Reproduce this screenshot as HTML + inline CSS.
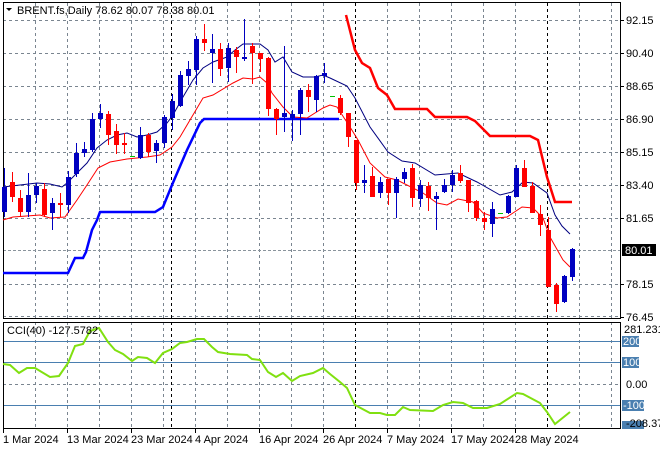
<!DOCTYPE html>
<html><head><meta charset="utf-8"><style>
html,body{margin:0;padding:0;background:#fff;}
svg{display:block;font-family:"Liberation Sans","DejaVu Sans",sans-serif;font-size:11px;}
</style></head><body>
<svg width="660" height="450" viewBox="0 0 660 450" xmlns="http://www.w3.org/2000/svg">
<rect width="660" height="450" fill="#fff"/>
<g stroke="#7a8590" stroke-width="1" stroke-dasharray="3,3" fill="none">
<path d="M35.5 3V318M67.5 3V318M99.5 3V318M131.5 3V318M163.5 3V318M195.5 3V318M227.5 3V318M259.5 3V318M291.5 3V318M323.5 3V318M387.5 3V318M419.5 3V318M451.5 3V318M483.5 3V318M515.5 3V318M579.5 3V318M611.5 3V318"/>
<path d="M35.5 322V428M67.5 322V428M99.5 322V428M131.5 322V428M163.5 322V428M195.5 322V428M227.5 322V428M259.5 322V428M291.5 322V428M323.5 322V428M387.5 322V428M419.5 322V428M451.5 322V428M483.5 322V428M515.5 322V428M579.5 322V428M611.5 322V428"/>
<path d="M3 20.5H621M3 53.5H621M3 86.5H621M3 119.5H621M3 152.5H621M3 185.5H621M3 218.5H621M3 284.5H621M3 316.5H621M3 384.5H621"/>
</g>
<path d="M3 250.5H621" stroke="#8a949c" stroke-dasharray="3,2"/>
<g stroke="#000" stroke-dasharray="3,3" fill="none">
<path d="M171.5 3V318M355.5 3V318M547.5 3V318M171.5 322V428M355.5 322V428M547.5 322V428"/>
</g>
<g stroke="#4a7fb0" stroke-width="1"><path d="M3 341.5H621M3 362.5H621M3 405.5H621"/></g>
<rect x="3.5" y="2.5" width="617" height="316" fill="none" stroke="#000"/>
<rect x="3.5" y="322.5" width="617" height="106" fill="none" stroke="#000"/>
<polyline fill="none" stroke="#0000ff" stroke-width="2.5" points="3,273 68,273 75,258 83,258 86,252 92,230 97,220 100,212 155,212 163,207 172,185 187,150 200,123 204,119 339,119"/>
<polyline fill="none" stroke="#ff0000" stroke-width="2.5" points="346,15 355,50 362,63 370,68 378,88 387,95 395,109 427,109 435,117 467,117 475,121 490,136 530,136 538,140 547,177 555,202 572,202"/>
<polyline fill="none" stroke="#000080" stroke-width="1" points="3,187 20,185 37,183 50,184 62,187 67,183 77,173 87,163 97,148 107,140 117,135 127,133 137,137 147,135 157,132 167,123 173,115 183,97 193,80 203,68 213,62 227,57 235,50 243,44 260,44 268,50 275,62 283,57 292,72 303,77 315,77 323,75 330,78 347,86 355,98 370,127 388,152 402,161 415,163 435,175 458,173 477,182 500,195 512,192 523,182 533,183 547,193 555,215 562,226 570,234"/>
<polyline fill="none" stroke="#ff0000" stroke-width="1" points="3,220 13,217 40,215 50,218 65,217 77,200 87,185 98,168 110,162 127,159 147,157 160,155 172,147 180,137 190,120 203,98 213,95 233,83 243,78 253,79 260,77 267,83 272,93 283,107 293,117 307,118 323,108 330,105 337,107 350,127 358,140 370,163 385,177 397,180 423,193 437,203 447,205 458,199 473,202 483,213 497,218 507,217 522,207 533,208 543,218 550,237 563,260 570,267"/>
<g fill="#0000c0" stroke="#0000c0">
<path fill="none" d="M4.5 168V217M28.5 173V217M36.5 183V203M52.5 198V230M68.5 171V213M76.5 143V177M84.5 142V157M92.5 113V152M100.5 104V128M140.5 127V159M156.5 140V163M164.5 115V148M172.5 94V130M180.5 71V107M188.5 61V85M196.5 36V85M212.5 34V83M228.5 43V82M244.5 19V61M284.5 46V132M292.5 110V141M300.5 88V135M316.5 75V112M324.5 63V83M364.5 165V193M380.5 177V198M396.5 177V218M404.5 168V183M420.5 180V207M436.5 192V230M444.5 179V193M452.5 170V192M492.5 202V237M508.5 195V214M516.5 165V197M564.5 275V303M572.5 248V281"/>
<g stroke="none">
<rect x="2" y="187" width="5" height="25"/><rect x="26" y="195" width="5" height="17"/><rect x="34" y="186" width="5" height="9"/><rect x="50" y="203" width="5" height="10"/><rect x="66" y="177" width="5" height="28"/><rect x="74" y="153" width="5" height="21"/><rect x="82" y="149" width="5" height="4"/><rect x="90" y="119" width="5" height="31"/><rect x="98" y="113" width="5" height="6"/><rect x="138" y="135" width="5" height="23"/><rect x="154" y="143" width="5" height="8"/><rect x="162" y="117" width="5" height="26"/><rect x="170" y="101" width="5" height="17"/><rect x="178" y="75" width="5" height="31"/><rect x="186" y="69" width="5" height="7"/><rect x="194" y="39" width="5" height="31"/><rect x="210" y="49" width="5" height="4"/><rect x="226" y="48" width="5" height="20"/><rect x="242" y="57" width="5" height="2"/><rect x="282" y="113" width="5" height="4"/><rect x="290" y="114" width="5" height="4"/><rect x="298" y="90" width="5" height="24"/><rect x="314" y="76" width="5" height="24"/><rect x="322" y="73" width="5" height="3"/><rect x="362" y="180" width="5" height="3"/><rect x="378" y="182" width="5" height="11"/><rect x="394" y="179" width="5" height="14"/><rect x="402" y="172" width="5" height="7"/><rect x="418" y="185" width="5" height="14"/><rect x="434" y="196" width="5" height="3"/><rect x="442" y="185" width="5" height="7"/><rect x="450" y="175" width="5" height="10"/><rect x="490" y="209" width="5" height="15"/><rect x="506" y="196" width="5" height="17"/><rect x="514" y="168" width="5" height="29"/><rect x="562" y="276" width="5" height="26"/><rect x="570" y="249" width="5" height="28"/>
</g></g>
<g fill="#ff0000" stroke="#ff0000">
<path fill="none" d="M12.5 172V202M20.5 190V217M44.5 183V217M60.5 193V217M108.5 111V145M116.5 124V154M124.5 133V154M148.5 133V157M204.5 24V51M220.5 43V76M236.5 47V73M252.5 43V84M260.5 53V72M268.5 57V116M276.5 108V135M308.5 84V112M340.5 95V115M348.5 113V147M356.5 140V190M372.5 167V197M388.5 179V205M412.5 164V207M428.5 182V211M460.5 165V183M468.5 180V212M476.5 200V221M484.5 212V230M524.5 160V187M532.5 182V213M540.5 205V236M548.5 217V287M556.5 283V312"/>
<g stroke="none">
<rect x="10" y="182" width="5" height="15"/><rect x="18" y="198" width="5" height="14"/><rect x="42" y="189" width="5" height="26"/><rect x="58" y="203" width="5" height="2"/><rect x="106" y="114" width="5" height="21"/><rect x="114" y="131" width="5" height="14"/><rect x="122" y="143" width="5" height="2"/><rect x="146" y="135" width="5" height="17"/><rect x="202" y="39" width="5" height="4"/><rect x="218" y="49" width="5" height="20"/><rect x="234" y="50" width="5" height="7"/><rect x="250" y="46" width="5" height="7"/><rect x="258" y="53" width="5" height="6"/><rect x="266" y="58" width="5" height="51"/><rect x="274" y="109" width="5" height="10"/><rect x="306" y="90" width="5" height="7"/><rect x="338" y="98" width="5" height="15"/><rect x="346" y="113" width="5" height="24"/><rect x="354" y="140" width="5" height="43"/><rect x="370" y="176" width="5" height="21"/><rect x="386" y="179" width="5" height="14"/><rect x="410" y="168" width="5" height="30"/><rect x="426" y="186" width="5" height="12"/><rect x="458" y="173" width="5" height="8"/><rect x="466" y="180" width="5" height="23"/><rect x="474" y="201" width="5" height="17"/><rect x="482" y="218" width="5" height="4"/><rect x="522" y="168" width="5" height="19"/><rect x="530" y="186" width="5" height="27"/><rect x="538" y="214" width="5" height="11"/><rect x="546" y="230" width="5" height="57"/><rect x="554" y="285" width="5" height="19"/>
</g></g>
<path d="M130 156.5H135M330 96.5H335M498 213.5H503" stroke="#00c000"/>
<polyline fill="none" stroke="#80e010" stroke-width="2" points="3,364 10,365 19,373 27,368 35,368 50,377 59,376 68,363 75,346 83,344 90,331 99,328 108,342 115,350 123,354 132,361 138,357 147,358 155,363 163,353 172,349 180,343 187,342 197,339 204,339 212,347 218,352 230,354 247,355 252,359 260,360 268,372 276,377 283,373 292,381 300,376 313,373 323,368 330,374 340,382 347,388 355,405 370,413 380,413 387,415 395,415 403,407 410,410 433,411 443,405 453,402 463,403 473,408 487,408 500,404 517,393 523,394 540,403 547,412 555,424 570,412"/>
<path d="M6 8H12L9 11Z" fill="#000"/>
<text x="17" y="14" fill="#000">BRENT.fs,Daily  78.62 80.07 78.38 80.01</text>
<text x="7" y="334" fill="#000">CCI(40) -127.5782</text>
<g fill="#000">
<path d="M621 20.5h3M621 53.5h3M621 86.5h3M621 119.5h3M621 152.5h3M621 185.5h3M621 218.5h3M621 284.5h3M621 317.5h3" stroke="#000"/>
<text x="626" y="24">92.15</text><text x="626" y="57">90.40</text><text x="626" y="90">88.65</text><text x="626" y="123">86.90</text><text x="626" y="156">85.15</text><text x="626" y="189">83.40</text><text x="626" y="222">81.65</text><text x="626" y="288">78.15</text><text x="626" y="321">76.45</text>
<text x="624" y="333">281.2317</text>
<text x="626" y="388">0.00</text>
</g>
<rect x="622" y="244" width="34" height="12" fill="#000"/>
<text x="625" y="254" fill="#fff">80.01</text>
<rect x="622" y="336" width="17" height="11" fill="#4a7fb0"/><text x="623" y="345" fill="#fff">200</text>
<rect x="622" y="357" width="17" height="11" fill="#4a7fb0"/><text x="623" y="366" fill="#fff">100</text>
<rect x="622" y="400" width="22" height="11" fill="#4a7fb0"/><text x="623" y="409" fill="#fff">-100</text>
<rect x="622" y="421" width="22" height="8" fill="#4a7fb0"/>
<text x="626" y="427" fill="#000">-208.371</text>
<g fill="#000" stroke="none">
<path d="M3.5 429v4M67.5 429v4M131.5 429v4M195.5 429v4M259.5 429v4M323.5 429v4M387.5 429v4M451.5 429v4M515.5 429v4" stroke="#000"/>
<text x="3" y="443">1 Mar 2024</text><text x="67" y="443">13 Mar 2024</text><text x="131" y="443">23 Mar 2024</text><text x="195" y="443">4 Apr 2024</text><text x="259" y="443">16 Apr 2024</text><text x="323" y="443">26 Apr 2024</text><text x="387" y="443">7 May 2024</text><text x="451" y="443">17 May 2024</text><text x="515" y="443">28 May 2024</text>
</g>
</svg>
</body></html>
